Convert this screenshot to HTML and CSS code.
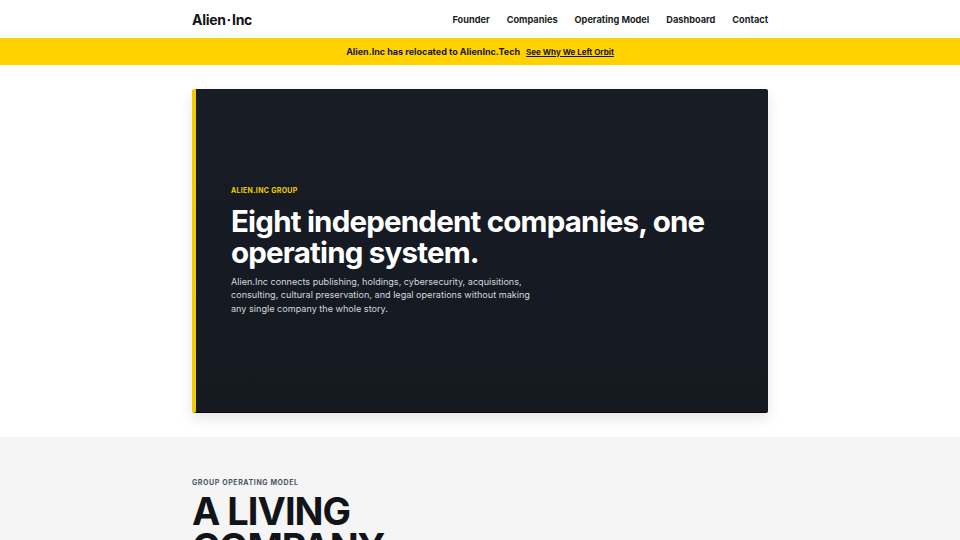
FILE: index.html
```html
<!DOCTYPE html>
<html lang="en">
<head>
<meta charset="utf-8">
<title>Alien.Inc</title>
<link rel="stylesheet" href="styles.css">
</head>
<body>
<header class="site-header">
  <div class="wrap header-row">
    <a class="logo" href="#">Alien<span class="dot">·</span>Inc</a>
    <nav class="nav">
      <a href="#">Founder</a>
      <a href="#">Companies</a>
      <a href="#">Operating Model</a>
      <a href="#">Dashboard</a>
      <a href="#">Contact</a>
    </nav>
  </div>
</header>
<div class="notice">
  <span>Alien.Inc has relocated to AlienInc.Tech</span>
  <a href="#">See Why We Left Orbit</a>
</div>
<section class="hero-section">
  <div class="wrap">
    <div class="hero-card">
      <div class="hero-body">
        <p class="eyebrow">ALIEN.INC GROUP</p>
        <h1>Eight independent companies, one operating system.</h1>
        <p class="lead">Alien.Inc connects publishing, holdings, cybersecurity, acquisitions, consulting, cultural preservation, and legal operations without making any single company the whole story.</p>
      </div>
    </div>
  </div>
</section>
<section class="model">
  <div class="wrap">
    <p class="kicker">GROUP OPERATING MODEL</p>
    <h2>A LIVING COMPANY</h2>
  </div>
</section>
</body>
</html>
```
FILE: styles.css
```css
* { box-sizing: border-box; }
html, body { margin: 0; padding: 0; }
body {
  font-family: Inter, "Noto Sans", "Liberation Sans", sans-serif;
  color: #111418;
  background: #fff;
}
a { color: inherit; text-decoration: none; }
p, h1, h2 { margin: 0; }

.wrap { width: 576px; margin: 0 auto; }

.site-header { height: 38px; background: #fff; }
.header-row {
  height: 100%;
  display: flex;
  align-items: center;
  justify-content: space-between;
}
.logo {
  font-size: 14px;
  font-weight: 700;
  letter-spacing: -0.3px;
  color: #111418;
}
.logo .dot { margin: 0 1px; }
.nav { display: flex; gap: 17px; }
.nav a {
  font-size: 9.2px;
  font-weight: 700;
  color: #1a1d22;
}

.notice {
  height: 27px;
  background: #ffd200;
  display: flex;
  align-items: center;
  justify-content: center;
  gap: 6px;
  font-size: 9px;
  font-weight: 700;
  color: #15181c;
}
.notice a {
  font-size: 8px;
  text-decoration: underline;
  text-underline-offset: 1px;
}

.hero-section { padding: 24px 0; background: #fff; }
.hero-card {
  height: 324px;
  background: linear-gradient(180deg, #171c25 0%, #151a21 100%);
  border-left: 4px solid #f2cc00;
  border-bottom: 1px solid #05070a;
  border-radius: 2px;
  box-shadow: 0 6px 14px rgba(0, 0, 0, 0.10);
  display: flex;
  align-items: center;
}
.hero-body { padding: 0 35px; }
.eyebrow {
  font-size: 7px;
  font-weight: 700;
  letter-spacing: 0.3px;
  color: #f2cc00;
  margin-bottom: 11px;
}
.hero-body h1 {
  font-size: 29.5px;
  line-height: 31px;
  font-weight: 700;
  letter-spacing: -0.8px;
  color: #ffffff;
  max-width: 490px;
  margin-bottom: 7px;
}
.lead {
  font-size: 9.1px;
  line-height: 13.5px;
  color: #d3d7dd;
  max-width: 300px;
}

.model {
  background: #f5f5f5;
  padding: 41px 0 0;
  min-height: 103px;
}
.kicker {
  font-size: 7px;
  font-weight: 700;
  letter-spacing: 0.6px;
  color: #4a5566;
  margin-bottom: 6px;
}
.model h2 {
  font-size: 38px;
  line-height: 36px;
  font-weight: 700;
  letter-spacing: -1px;
  color: #111418;
  width: 200px;
}
```
